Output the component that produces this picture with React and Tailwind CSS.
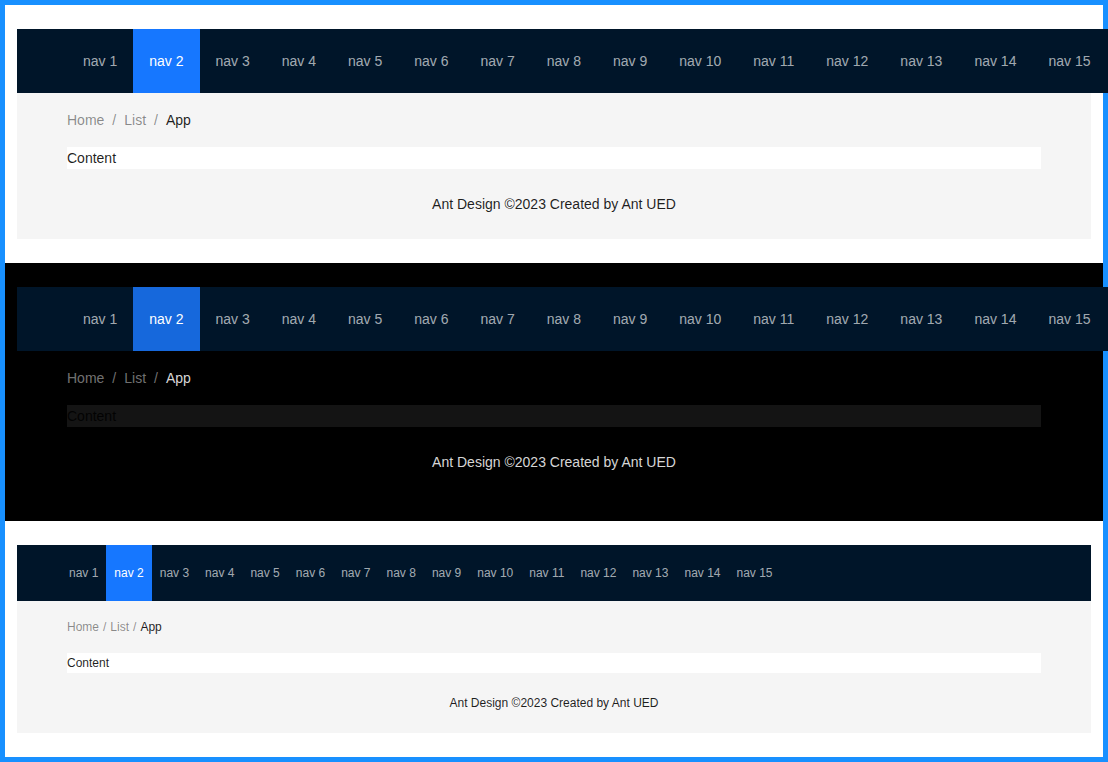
const NAV = Array.from({ length: 15 }, (_, i) => `nav ${i + 1}`)

const THEMES = {
  light: {
    section: 'bg-white',
    layout: 'bg-[#f5f5f5]',
    selected: 'bg-[#1677ff]',
    crumb: 'text-[rgba(0,0,0,0.45)]',
    crumbActive: 'text-[rgba(0,0,0,0.88)]',
    box: 'bg-white text-[rgba(0,0,0,0.88)]',
    footer: 'text-[rgba(0,0,0,0.88)]',
  },
  dark: {
    section: 'bg-black',
    layout: 'bg-black',
    selected: 'bg-[#1668dc]',
    crumb: 'text-[rgba(255,255,255,0.45)]',
    crumbActive: 'text-[rgba(255,255,255,0.85)]',
    box: 'bg-[#141414] text-[rgba(0,0,0,0.88)]',
    footer: 'text-[rgba(255,255,255,0.85)]',
  },
}

function DemoLayout({ theme = 'light', compact = false }) {
  const t = THEMES[theme]

  return (
    <div className={`${t.section} px-3 py-6`}>
      <div className={`${t.layout} flex flex-col`}>
        {/* Header */}
        <header
          className={
            compact
              ? 'bg-[#001529] flex items-center h-14 pl-[44px] pr-[50px] text-xs'
              : 'bg-[#001529] flex items-center h-16 px-[50px] text-sm w-max min-w-full'
          }>
          {NAV.map((n, i) => (
            <div
              key={n}
              className={`h-full flex items-center whitespace-nowrap ${compact ? 'px-2' : 'px-4'} ${
                i === 1 ? `${t.selected} text-white` : 'text-[rgba(255,255,255,0.65)]'
              }`}>
              {n}
            </div>
          ))}
        </header>

        {/* Content */}
        <main className={`px-[50px] ${compact ? 'text-xs leading-5' : 'text-sm leading-[22px]'}`}>
          <div className="flex my-4">
            <span className={t.crumb}>Home</span>
            <span className={`${t.crumb} ${compact ? 'mx-1' : 'mx-2'}`}>/</span>
            <span className={t.crumb}>List</span>
            <span className={`${t.crumb} ${compact ? 'mx-1' : 'mx-2'}`}>/</span>
            <span className={t.crumbActive}>App</span>
          </div>
          <div className={t.box}>Content</div>
        </main>

        {/* Footer */}
        <footer
          className={`text-center px-[50px] ${t.footer} ${
            compact ? 'py-5 text-xs leading-5' : 'py-6 text-sm leading-[22px]'
          }`}>
          Ant Design ©2023 Created by Ant UED
        </footer>
      </div>
    </div>
  )
}

export default function App() {
  return (
    <div className="w-full overflow-hidden" style={{ fontFamily: '"Liberation Sans", Arial, sans-serif' }}>
      <div className="border-[5px] border-[#1890ff]">
        <DemoLayout theme="light" />
        <DemoLayout theme="dark" />
        <DemoLayout theme="light" compact />
      </div>
    </div>
  )
}
